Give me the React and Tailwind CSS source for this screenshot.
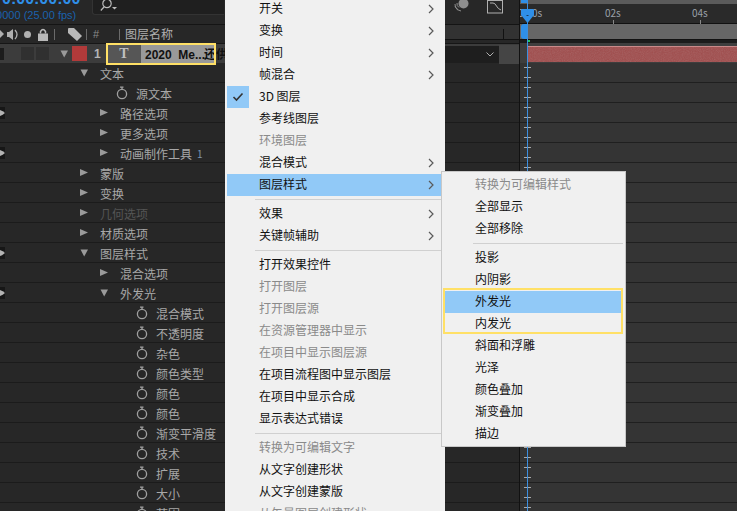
import React from "react";

const font = { fontFamily: '"Noto Sans CJK SC", "Liberation Sans", sans-serif' };
const latin = { fontFamily: '"Liberation Sans", sans-serif' };

function Tri({ open, className = "" }) {
  return (
    <svg width="9" height="9" viewBox="0 0 9 9" className={className}>
      {open ? <path d="M0.5 1.5 H8 L4.2 8.5 Z" fill="#9a9a9a" /> : <path d="M0 1 L8 4.5 L0 8 Z" fill="#9a9a9a" />}
    </svg>
  );
}

function Watch() {
  return (
    <svg width="12" height="14" viewBox="0 0 12 14" fill="none" stroke="#a0a0a0" strokeWidth="1.3">
      <circle cx="6" cy="8" r="4.6" />
      <path d="M4 1.2 H7.5 M6 1.2 V3.2" />
    </svg>
  );
}

function Eye() {
  return (
    <div className="w-[5px] h-[12px] bg-[#161616] flex items-center overflow-hidden shrink-0">
      <svg width="5" height="8" viewBox="0 0 5 8"><path d="M0 1 Q3 2 5 4 Q3 6 0 7 Z" fill="#b4b4b4" /></svg>
    </div>
  );
}

function Chevron() {
  return (
    <svg width="6" height="10" viewBox="0 0 6 10" fill="none" stroke="#5a5a5a" strokeWidth="1.2">
      <path d="M1 1 L5 5 L1 9" />
    </svg>
  );
}

const rows = [
  { t: "文本", x: 100, tri: 80, open: true },
  { t: "源文本", x: 136, watch: 116 },
  { t: "路径选项", x: 120, tri: 100, eye: true },
  { t: "更多选项", x: 120, tri: 100 },
  { t: "动画制作工具", x: 120, tri: 100, eye: true, n: "1" },
  { t: "蒙版", x: 100, tri: 80 },
  { t: "变换", x: 100, tri: 80 },
  { t: "几何选项", x: 100, tri: 80, dim: true },
  { t: "材质选项", x: 100, tri: 80 },
  { t: "图层样式", x: 100, tri: 80, open: true, eye: true },
  { t: "混合选项", x: 120, tri: 100 },
  { t: "外发光", x: 120, tri: 100, open: true, eye: true },
  { t: "混合模式", x: 156, watch: 136 },
  { t: "不透明度", x: 156, watch: 136 },
  { t: "杂色", x: 156, watch: 136 },
  { t: "颜色类型", x: 156, watch: 136 },
  { t: "颜色", x: 156, watch: 136 },
  { t: "颜色", x: 156, watch: 136 },
  { t: "渐变平滑度", x: 156, watch: 136 },
  { t: "技术", x: 156, watch: 136 },
  { t: "扩展", x: 156, watch: 136 },
  { t: "大小", x: 156, watch: 136 },
  { t: "范围", x: 156, watch: 136 },
];

function Row({ r }) {
  const iconLeft = r.tri ?? r.watch;
  return (
    <div className="h-[20px] shrink-0 flex items-center border-b border-[#1b1b1b] bg-[#272727]">
      <div className="w-[5px] shrink-0">{r.eye && <Eye />}</div>
      <div className="flex items-center" style={{ paddingLeft: iconLeft - 5 }}>
        {r.tri ? <Tri open={r.open} /> : <Watch />}
      </div>
      <span
        className={`text-[12px] leading-none mt-[2px] whitespace-nowrap ${r.dim ? "text-[#555555]" : "text-[#a8a8a8]"}`}
        style={{ marginLeft: r.x - iconLeft - (r.tri ? 9 : 12) }}
      >
        {r.t}
      </span>
      {r.n && <span className="ml-[5px] mt-[2px] text-[10px] leading-none text-[#7d94ad]">{r.n}</span>}
    </div>
  );
}

function MenuItem({ label, check, dim, active, sub, gutter }) {
  return (
    <div className={`h-[22px] flex items-center ${active ? "bg-[#91c9f7]" : ""}`}>
      <div className={`h-[22px] shrink-0 flex items-center justify-center ${gutter} ${check ? "bg-[#91c9f7]" : ""}`}>
        {check && (
          <svg width="12" height="10" viewBox="0 0 12 10" fill="none" stroke="#333" strokeWidth="1.6">
            <path d="M1.5 5 L4.5 8 L10.5 1.5" />
          </svg>
        )}
      </div>
      <span className={`text-[12px] leading-none -mt-[2px] whitespace-nowrap ${dim ? "text-[#8a8a8a]" : "text-[#111111]"}`}>{label}</span>
      {sub && <div className="ml-auto mr-[7px] flex items-center"><Chevron /></div>}
    </div>
  );
}

const S = { sep: true };
const mainMenu = [
  { label: "开关", sub: 1 }, { label: "变换", sub: 1 }, { label: "时间", sub: 1 }, { label: "帧混合", sub: 1 },
  { label: "3D 图层", check: 1 }, { label: "参考线图层" }, { label: "环境图层", dim: 1 }, { label: "混合模式", sub: 1 },
  { label: "图层样式", sub: 1, active: 1 }, S, { label: "效果", sub: 1 }, { label: "关键帧辅助", sub: 1 }, S,
  { label: "打开效果控件" }, { label: "打开图层", dim: 1 }, { label: "打开图层源", dim: 1 }, { label: "在资源管理器中显示", dim: 1 },
  { label: "在项目中显示图层源", dim: 1 }, { label: "在项目流程图中显示图层" }, { label: "在项目中显示合成" }, { label: "显示表达式错误" }, S,
  { label: "转换为可编辑文字", dim: 1 }, { label: "从文字创建形状" }, { label: "从文字创建蒙版" }, { label: "从矢量图层创建形状", dim: 1 },
];
const subMenu = [
  { label: "转换为可编辑样式", dim: 1 }, { label: "全部显示" }, { label: "全部移除" }, S,
  { label: "投影" }, { label: "内阴影" }, { label: "外发光", active: 1 }, { label: "内发光" }, { label: "斜面和浮雕" },
  { label: "光泽" }, { label: "颜色叠加" }, { label: "渐变叠加" }, { label: "描边" },
];

function Sep({ className = "" }) {
  return <div className={`w-px h-[11px] bg-[#6a6a6a] shrink-0 ${className}`} />;
}

function Header() {
  return (
    <div className="h-[43px] shrink-0 bg-[#272727] flex flex-col">
      <div className="h-[25px] shrink-0 flex items-start border-b border-[#141414] overflow-hidden">
        <div className="w-[92px] shrink-0 overflow-hidden h-[24px]">
          <div className="text-[16px] font-bold leading-none text-[#2f8fe8] -mt-[9px] ml-[2px] whitespace-nowrap" style={latin}>0:00:00:00</div>
          <div className="text-[11px] leading-none mt-[3px] -ml-[10px] text-[#1a62ad] whitespace-nowrap" style={latin}>00000 (25.00 fps)</div>
        </div>
        <div className="w-[132px] h-[15px] shrink-0 bg-[#1f1f1f] border-l border-b border-[#333333] rounded-bl-[3px] pl-[7px]">
          <svg width="18" height="12" viewBox="0 0 18 12" fill="none" stroke="#bbbbbb" strokeWidth="1.2">
            <circle cx="7" cy="3.5" r="4.2" />
            <path d="M4 7 L0.8 10.5" />
            <path d="M12 7 H17 L14.5 9.5 Z" fill="#bbbbbb" stroke="none" />
          </svg>
        </div>
        <div className="ml-[230px] flex items-start">
          <svg width="15" height="13" viewBox="0 0 15 13" fill="none" stroke="#8d8d8d">
            <circle cx="9.5" cy="3.5" r="5" fill="#8d8d8d" stroke="none" />
            <path d="M1 6 Q2 10.5 7 11 M1 4 Q0.5 8 4 9.5 M3 3 Q2.5 6 5 7.5" />
          </svg>
          <svg width="16" height="14" viewBox="0 0 16 14" fill="none" stroke="#b0b0b0" className="ml-[18px]">
            <rect x="0.5" y="0.5" width="15" height="12.5" />
            <path d="M3 3 H6 Q8 3 9.5 6 T14 10" />
          </svg>
        </div>
      </div>
      <div className="flex-1 flex items-center relative">
        <div className="flex items-center w-[54px] shrink-0 overflow-hidden">
          <svg width="4" height="8" viewBox="0 0 4 8" className="shrink-0"><path d="M0 0 L4 4 L0 8 Z" fill="#b0b0b0" /></svg>
          <svg width="12" height="13" viewBox="0 0 12 13" fill="#b0b0b0" className="ml-[3px] shrink-0"><path d="M0 4 H2 L6 1 V12 L2 9 H0 Z" /><path d="M8 2 Q12 6.5 8 11" fill="none" stroke="#b0b0b0" strokeWidth="1.3" /></svg>
          <div className="w-[7px] h-[7px] rounded-full bg-[#b0b0b0] ml-[5px] shrink-0" />
          <svg width="10" height="13" viewBox="0 0 10 13" fill="#b8b8b8" className="ml-[7px] shrink-0"><path d="M0 5.5 H10 V13 H0 Z" /><path d="M2.5 5.5 V3.5 Q5 -0.5 7.5 3.5 V5.5" fill="none" stroke="#b8b8b8" strokeWidth="1.5" /></svg>
        </div>
        <Sep />
        <svg width="14" height="13" viewBox="0 0 14 13" className="ml-[13px] shrink-0" fill="#b8b8b8"><path d="M0 1 Q0 0 1 0 H6 L14 8 L9 13 L0 5 Z" /></svg>
        <Sep className="ml-[4px]" />
        <span className="ml-[6px] w-[26px] text-[11px] leading-none text-[#8a8a8a]" style={latin}>#</span>
        <Sep />
        <span className="ml-[5px] text-[12px] leading-none text-[#b0b0b0] whitespace-nowrap">图层名称</span>
        <div className="absolute left-[445px] top-0 bottom-0 w-[74px] flex flex-col">
          <div className="h-[14px] bg-[#323232] flex justify-end pr-[15px] pt-[4px]">
            <div className="w-px h-[11px] bg-[#111111]" />
          </div>
          <div className="h-px bg-[#111111]" />
        </div>
      </div>
    </div>
  );
}

function LayerRow() {
  return (
    <div className="h-[20px] shrink-0 bg-[#3c3c3c] flex items-center relative border-t border-[#161616]">
      <div className="w-[4px] h-[12px] bg-[#1c1c1c] shrink-0" />
      <div className="w-[13px] h-[13px] bg-[#303030] ml-[17px]" />
      <div className="w-[13px] h-[13px] bg-[#303030] ml-[2px]" />
      <Tri open className="ml-[11px]" />
      <div className="w-[15px] h-[15px] bg-[#b23a3a] ml-[3px]" />
      <span className="ml-[7px] w-[13px] text-[12px] font-bold leading-none text-[#b5b5b5]" style={latin}>1</span>
      <div className="w-[34px] h-[20px] bg-[#565656] flex items-center justify-center text-[14px] font-bold text-[#c0c0c0]" style={{ fontFamily: '"Liberation Serif", serif' }}>T</div>
      <div className="w-[75px] h-[20px] bg-[#999999] flex items-center pl-[4px] pt-[3px] text-[12px] font-bold leading-none text-[#111] whitespace-pre" style={{ fontFamily: '"Liberation Sans", "Noto Sans CJK SC", sans-serif' }}>{"2020  Me..."}<span className="-ml-[1px]">还供</span></div>
      <div className="absolute left-[445px] top-[2px] h-[17px] w-[54px] bg-[#1e1e1e] flex items-center justify-end pr-[5px]">
        <svg width="8" height="5" viewBox="0 0 8 5" fill="none" stroke="#b0b0b0"><path d="M0.5 0.5 L4 4 L7.5 0.5" /></svg>
      </div>
      <div className="absolute left-[499px] top-[1px] h-[19px] w-[20px] bg-[#454545]" />
    </div>
  );
}

function TimeRow() {
  return (
    <div className="h-[20px] shrink-0 bg-[#343434] border-b border-[#1f1f1f] pl-[4px] flex items-center">
      <svg width="7" height="11" viewBox="0 0 7 11" fill="none" stroke="#a8a8a8" strokeWidth="1">
        <path d="M0 0.5 H7 M3.5 0.5 V10.5 M0 10.5 H7" />
      </svg>
    </div>
  );
}

export default function App() {
  return (
    <div className="relative w-[737px] h-[511px] overflow-hidden bg-[#272727] flex" style={font}>
      <div className="w-[520px] shrink-0 flex flex-col overflow-hidden border-r border-[#111111]">
        <Header />
        <LayerRow />
        {rows.map((r, i) => <Row key={i} r={r} />)}
      </div>
      <div className="flex-1 flex flex-col relative overflow-hidden">
        <div className="h-[4px] bg-[#5b5b5b] shrink-0 pl-[1px]"><div className="w-[6px] h-[3px] bg-[#2f8fe8]" /></div>
        <div className="h-[20px] shrink-0 bg-[#2a2a2a] border-b border-[#111] flex items-start">
          <span className="-ml-[2px] mt-[2px] text-[10px] leading-[14px] text-[#9aa0a8] w-[87px]" style={font}>0:00s</span>
          <span className="mt-[2px] text-[10px] leading-[14px] text-[#9aa0a8] w-[87px] relative">02s<span className="absolute left-[8px] top-[14px] w-px h-[4px] bg-[#888]" /></span>
          <span className="mt-[2px] text-[10px] leading-[14px] text-[#9aa0a8] relative">04s<span className="absolute left-[8px] top-[14px] w-px h-[4px] bg-[#888]" /></span>
        </div>
        <div className="h-[15px] shrink-0 bg-[#666666] pl-[1px]">
          <div className="w-[6px] h-[15px] bg-[#2f8fe8] rounded-l-[3px]" />
        </div>
        <div className="h-[4px] shrink-0 bg-[#1c1c1c] border-t border-[#111]" />
        <div className="h-[20px] shrink-0 bg-[#3e3e3e] pl-[8px] pt-[3px] pb-[1px]">
          <div className="h-full bg-[#a04c4c] border-t border-[#c98a8a] relative overflow-hidden">
            <svg width="209" height="16" className="absolute left-0 top-0">
              <filter id="clipnoise"><feTurbulence type="fractalNoise" baseFrequency="0.9" numOctaves="2" /><feColorMatrix type="saturate" values="0" /></filter>
              <rect width="209" height="16" filter="url(#clipnoise)" opacity="0.18" />
            </svg>
          </div>
        </div>
        {rows.map((r, i) => <TimeRow key={i} />)}
        <div className="absolute left-[7px] top-0 w-px h-full bg-[#3b8fe0]" />
        <svg width="13" height="14" viewBox="0 0 13 14" className="absolute left-[1px] top-[9px]">
          <path d="M1 0 H12 Q13 0 13 1 V6 L6.5 14 L0 6 V1 Q0 0 1 0 Z" fill="#2f8fe8" />
          <path d="M5.5 6.5 H7.5" stroke="#1a3a5a" />
        </svg>
        <div className="absolute left-[8px] top-[40px] w-[2px] h-[2px] bg-[#22c55e]" />
      </div>

      <div className="absolute left-[225px] top-[-2px] w-[220px] bg-[#f0f0f0] pl-[2px] pr-[4px]">
        {mainMenu.map((m, i) =>
          m.sep ? (
            <div key={i} className="h-[7px] flex items-center pl-[28px]"><div className="w-full h-px bg-[#d0d0d0]" /></div>
          ) : (
            <MenuItem key={i} {...m} gutter="w-[22px] mr-[10px]" />
          )
        )}
      </div>

      <div className="absolute left-[441px] top-[171px] w-[185px] h-[276px] bg-[#f0f0f0] border border-[#c8c8c8] p-[2px]">
        {subMenu.map((m, i) =>
          m.sep ? (
            <div key={i} className="h-[7px] flex items-center pl-[29px]"><div className="w-full h-px bg-[#d0d0d0]" /></div>
          ) : (
            <MenuItem key={i} {...m} gutter="w-[30px] mr-[1px]" />
          )
        )}
      </div>

      <div className="absolute left-[443px] top-[288px] w-[180px] h-[46px] border-2 border-[#ffe066]" />
      <div className="absolute left-[106px] top-[43px] w-[110px] h-[22px] border-2 border-[#ffe066]" />
    </div>
  );
}
